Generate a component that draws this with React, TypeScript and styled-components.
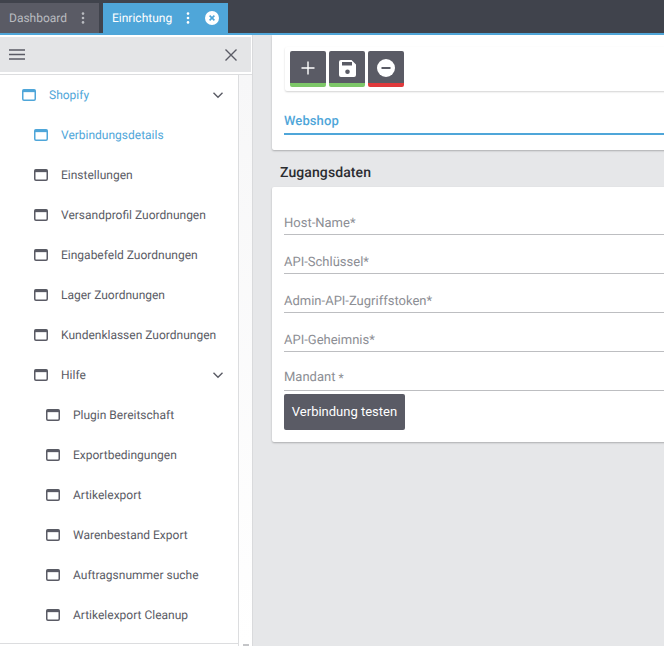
import React from "react";
import styled, { createGlobalStyle } from "styled-components";

const Global = createGlobalStyle`
  html, body { margin: 0; padding: 0; height: 100%; overflow: hidden; }
  body {
    font-family: Roboto, "Liberation Sans", sans-serif;
    background: #e6e7e9;
    text-rendering: geometricPrecision;
  }
  * { box-sizing: border-box; }
`;

const Page = styled.div`
  width: 664px;
  height: 646px;
  display: flex;
  flex-direction: column;
  overflow: hidden;
`;

const TopBar = styled.header`
  height: 35px;
  flex: none;
  background: #40434c;
  border-bottom: 2px solid #4fa6d9;
  display: flex;
  align-items: flex-end;
  gap: 4px;
`;

const Tab = styled.div<{ $active?: boolean }>`
  height: 30px;
  display: flex;
  align-items: center;
  padding-left: 9px;
  font-size: 12px;
  color: ${(p) => (p.$active ? "#fff" : "#b9bbc0")};
  background: ${(p) => (p.$active ? "#4fa6d9" : "#5a5b65")};
  width: ${(p) => (p.$active ? "125px" : "99px")};
`;

const TabLabel = styled.span`
  width: 59px;
  flex: none;
  white-space: nowrap;
`;

const ActiveTabLabel = styled(TabLabel)`
  width: 61px;
`;

const Dots = styled.svg`
  width: 4px;
  height: 12px;
  flex: none;
  margin-left: 13px;
`;

const CloseBadge = styled.svg`
  width: 14px;
  height: 14px;
  flex: none;
  margin-left: 15px;
`;

const Body = styled.div`
  flex: 1;
  min-height: 0;
  display: flex;
`;

const Sidebar = styled.aside`
  width: 253px;
  flex: none;
  display: flex;
  flex-direction: column;
  background: #fff;
  border-right: 1px solid #d9dadc;
`;

const SideHeader = styled.div`
  height: 39px;
  flex: none;
  margin-right: 1px;
  background: #e4e5e7;
  border-top: 2px solid #fff;
  border-bottom: 2px solid #fff;
  display: flex;
  align-items: center;
  justify-content: space-between;
  padding: 0 13px 0 9px;
`;

const SideBody = styled.div`
  flex: 1;
  min-height: 0;
  display: flex;
  border-top: 1px solid #dcdddf;
`;

const NavPane = styled.div`
  width: 239px;
  flex: none;
  border-right: 1px solid #dcdddf;
`;

const ScrollTrack = styled.div`
  flex: 1;
  background: linear-gradient(#f7f7f8, #ffffff);
  display: flex;
  align-items: flex-end;
  justify-content: center;
`;

const ScrollThumb = styled.div`
  width: 6px;
  height: 2px;
  background: #c4c5c8;
`;

const NavList = styled.nav`
  display: flex;
  flex-direction: column;
  border-bottom: 1px solid #dcdddf;
  padding-bottom: 8px;
`;

const NavRow = styled.div<{ $level: number; $active?: boolean }>`
  height: 40px;
  flex: none;
  display: flex;
  align-items: center;
  padding-left: ${(p) => 22 + p.$level * 12}px;
  font-size: 12px;
  color: ${(p) => (p.$active ? "#4fa6d9" : "#5a5b65")};
`;

const NavIcon = styled.svg`
  width: 14px;
  height: 12px;
  flex: none;
  margin-right: 13px;
`;

const NavLabel = styled.span`
  flex: 1;
  white-space: nowrap;
`;

const Chevron = styled.svg`
  width: 12px;
  height: 12px;
  flex: none;
  margin-right: 14px;
`;

const Main = styled.main`
  flex: 1;
  min-width: 0;
  padding-left: 19px;
  display: flex;
  flex-direction: column;
`;

const Card = styled.section`
  background: #fff;
  border-radius: 2px;
  box-shadow: 0 1px 2px rgba(0, 0, 0, 0.25);
  margin-right: -4px;
`;

const TopCard = styled(Card)`
  height: 115px;
  flex: none;
  padding: 12px 0 0 12px;
  border-radius: 0 0 2px 2px;
`;

const ToolBox = styled.div`
  height: 44px;
  margin-left: 1px;
  padding: 4px 5px;
  display: flex;
  gap: 3px;
  border-radius: 2px;
  box-shadow: 0 1px 2px rgba(0, 0, 0, 0.18);
`;

const ToolButton = styled.button<{ $accent: string }>`
  width: 36px;
  height: 36px;
  padding: 2px 0 0;
  border: 0;
  border-bottom: 4px solid ${(p) => p.$accent};
  border-radius: 2px;
  background: #5a5b65;
  display: flex;
  align-items: center;
  justify-content: center;
`;

const TabStrip = styled.div`
  margin-top: 21px;
  height: 23px;
  font-size: 13px;
  font-weight: 500;
  letter-spacing: 0.1px;
  color: #4fa6d9;
  border-bottom: 2px solid #4fa6d9;
  line-height: 20px;
`;

const SectionTitle = styled.h2`
  margin: 14px 0 0 8px;
  height: 23px;
  flex: none;
  font-size: 14px;
  line-height: 18px;
  font-weight: 500;
  letter-spacing: 0.1px;
  color: #2b2c30;
`;

const FormCard = styled(Card)`
  height: 255px;
  flex: none;
  padding: 21px 0 0 12px;
  display: flex;
  flex-direction: column;
`;

const Field = styled.div<{ $h?: number; $pb?: number }>`
  height: ${(p) => p.$h ?? 39}px;
  flex: none;
  display: flex;
  align-items: flex-end;
  padding-bottom: ${(p) => p.$pb ?? 3}px;
  border-bottom: 1px solid #bdbec1;
  font-size: 13px;
  color: #8c8e94;
`;

const SmallStar = styled.span`
  font-size: 12px;
  margin-left: 3px;
`;

const TestButton = styled.button`
  width: 121px;
  height: 36px;
  margin-top: 3px;
  padding: 0 0 2px;
  border: 0;
  border-radius: 2px;
  background: #5a5b65;
  color: #fff;
  font-family: inherit;
  font-size: 13px;
`;

const WindowIcon = ({ color }: { color: string }) => (
  <NavIcon viewBox="0 0 14 12">
    <rect x="0.75" y="0.75" width="12.5" height="10.5" rx="1.2" fill="none" stroke={color} strokeWidth="1.5" />
    <rect x="0.75" y="0.75" width="12.5" height="2.4" fill={color} />
  </NavIcon>
);

const Down = () => (
  <Chevron viewBox="0 0 12 12">
    <path d="M1.5 3.8 6 8.2l4.5-4.4" fill="none" stroke="#5a5b65" strokeWidth="1.4" />
  </Chevron>
);

const DotsIcon = ({ color }: { color: string }) => (
  <Dots viewBox="0 0 4 12">
    <circle cx="2" cy="1.6" r="1.3" fill={color} />
    <circle cx="2" cy="6" r="1.3" fill={color} />
    <circle cx="2" cy="10.4" r="1.3" fill={color} />
  </Dots>
);

const nav: { label: string; level: number; active?: boolean; open?: boolean }[] = [
  { label: "Shopify", level: 0, active: true, open: true },
  { label: "Verbindungsdetails", level: 1, active: true },
  { label: "Einstellungen", level: 1 },
  { label: "Versandprofil Zuordnungen", level: 1 },
  { label: "Eingabefeld Zuordnungen", level: 1 },
  { label: "Lager Zuordnungen", level: 1 },
  { label: "Kundenklassen Zuordnungen", level: 1 },
  { label: "Hilfe", level: 1, open: true },
  { label: "Plugin Bereitschaft", level: 2 },
  { label: "Exportbedingungen", level: 2 },
  { label: "Artikelexport", level: 2 },
  { label: "Warenbestand Export", level: 2 },
  { label: "Auftragsnummer suche", level: 2 },
  { label: "Artikelexport Cleanup", level: 2 },
];

export default function App() {
  return (
    <Page>
      <Global />
      <TopBar>
        <Tab>
          <TabLabel>Dashboard</TabLabel>
          <DotsIcon color="#b9bbc0" />
        </Tab>
        <Tab $active>
          <ActiveTabLabel>Einrichtung</ActiveTabLabel>
          <DotsIcon color="#fff" />
          <CloseBadge viewBox="0 0 14 14">
            <circle cx="7" cy="7" r="7" fill="#fff" />
            <path d="M4.6 4.6l4.8 4.8M9.4 4.6 4.6 9.4" stroke="#4fa6d9" strokeWidth="1.6" />
          </CloseBadge>
        </Tab>
      </TopBar>
      <Body>
        <Sidebar>
          <SideHeader>
            <svg width="16" height="11" viewBox="0 0 16 11">
              <path d="M0 1h16M0 5.500h16M0 10h16" stroke="#5a5b65" strokeWidth="1.3" />
            </svg>
            <svg width="14" height="14" viewBox="0 0 14 14">
              <path d="M1.500 1.500l11 11M12.500 1.500l-11 11" stroke="#5a5b65" strokeWidth="1.4" />
            </svg>
          </SideHeader>
          <SideBody>
            <NavPane>
              <NavList>
                {nav.map((n) => (
                  <NavRow key={n.label} $level={n.level} $active={n.active}>
                    <WindowIcon color={n.active ? "#4fa6d9" : "#5a5b65"} />
                    <NavLabel>{n.label}</NavLabel>
                    {n.open && <Down />}
                  </NavRow>
                ))}
              </NavList>
            </NavPane>
            <ScrollTrack>
              <ScrollThumb />
            </ScrollTrack>
          </SideBody>
        </Sidebar>
        <Main>
          <TopCard>
            <ToolBox>
              <ToolButton $accent="#7dc768">
                <svg width="14" height="14" viewBox="0 0 14 14">
                  <path d="M7 0.500v13M0.500 7h13" stroke="#fff" strokeWidth="1.4" />
                </svg>
              </ToolButton>
              <ToolButton $accent="#7dc768">
                <svg width="17" height="17" viewBox="0 0 17 17">
                  <path fillRule="evenodd" fill="#fff" d="M2 0h10.500L17 4.500V15a2 2 0 0 1-2 2H2a2 2 0 0 1-2-2V2a2 2 0 0 1 2-2Zm1 2v3.500h10V2H3Zm5.500 7.500a2.300 2.300 0 1 0 0 4.600 2.300 2.300 0 0 0 0-4.600Z" />
                </svg>
              </ToolButton>
              <ToolButton $accent="#e03a3c">
                <svg width="18" height="18" viewBox="0 0 18 18">
                  <circle cx="9" cy="9" r="9" fill="#fff" />
                  <rect x="4.500" y="8" width="9" height="2" fill="#5a5b65" />
                </svg>
              </ToolButton>
            </ToolBox>
            <TabStrip>Webshop</TabStrip>
          </TopCard>
          <SectionTitle>Zugangsdaten</SectionTitle>
          <FormCard>
            <Field $h={27}>Host-Name*</Field>
            <Field>API-Schlüssel*</Field>
            <Field>Admin-API-Zugriffstoken*</Field>
            <Field>API-Geheimnis*</Field>
            <Field $pb={5}>
              Mandant<SmallStar>*</SmallStar>
            </Field>
            <TestButton>Verbindung testen</TestButton>
          </FormCard>
        </Main>
      </Body>
    </Page>
  );
}
